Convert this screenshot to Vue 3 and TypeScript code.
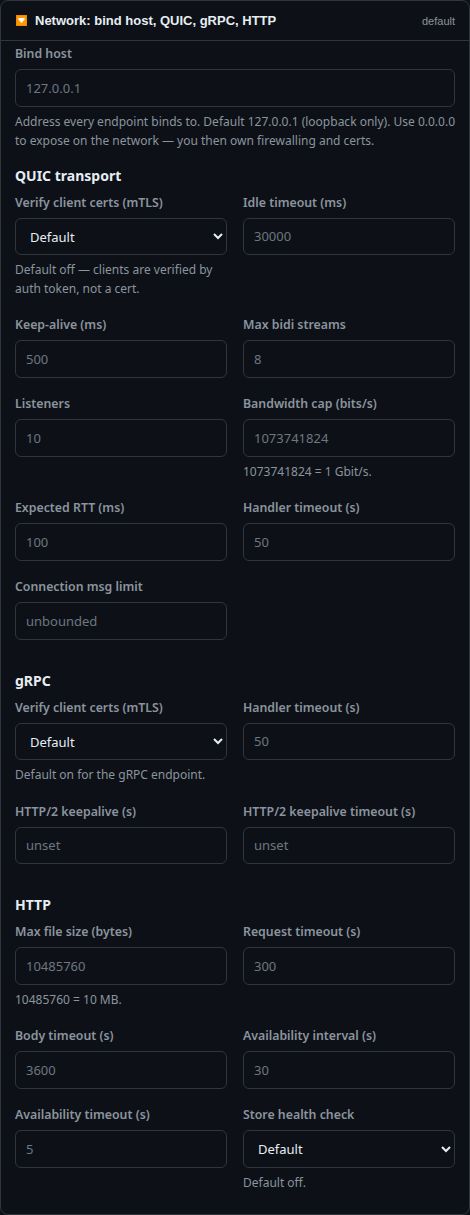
<script setup lang="ts">
type Field = {
  label: string
  placeholder?: string
  select?: boolean
  help?: string
}

type Section = {
  title?: string
  rows: Field[][]
}

const sections: Section[] = [
  {
    title: 'QUIC transport',
    rows: [
      [
        { label: 'Verify client certs (mTLS)', select: true, help: 'Default off — clients are verified by auth token, not a cert.' },
        { label: 'Idle timeout (ms)', placeholder: '30000' },
      ],
      [
        { label: 'Keep-alive (ms)', placeholder: '500' },
        { label: 'Max bidi streams', placeholder: '8' },
      ],
      [
        { label: 'Listeners', placeholder: '10' },
        { label: 'Bandwidth cap (bits/s)', placeholder: '1073741824', help: '1073741824 = 1 Gbit/s.' },
      ],
      [
        { label: 'Expected RTT (ms)', placeholder: '100' },
        { label: 'Handler timeout (s)', placeholder: '50' },
      ],
      [{ label: 'Connection msg limit', placeholder: 'unbounded' }],
    ],
  },
  {
    title: 'gRPC',
    rows: [
      [
        { label: 'Verify client certs (mTLS)', select: true, help: 'Default on for the gRPC endpoint.' },
        { label: 'Handler timeout (s)', placeholder: '50' },
      ],
      [
        { label: 'HTTP/2 keepalive (s)', placeholder: 'unset' },
        { label: 'HTTP/2 keepalive timeout (s)', placeholder: 'unset' },
      ],
    ],
  },
  {
    title: 'HTTP',
    rows: [
      [
        { label: 'Max file size (bytes)', placeholder: '10485760', help: '10485760 = 10 MB.' },
        { label: 'Request timeout (s)', placeholder: '300' },
      ],
      [
        { label: 'Body timeout (s)', placeholder: '3600' },
        { label: 'Availability interval (s)', placeholder: '30' },
      ],
      [
        { label: 'Availability timeout (s)', placeholder: '5' },
        { label: 'Store health check', select: true, help: 'Default off.' },
      ],
    ],
  },
]
</script>

<template>
  <div class="card">
    <header class="head">
      <span class="marker" aria-hidden="true">
        <svg viewBox="0 0 9 9" width="9" height="9"><path d="M1.5 2h6v1.5L4.5 7 1.5 3.5z" fill="#fff" /></svg>
      </span>
      <span class="title">Network: bind host, QUIC, gRPC, HTTP</span>
      <span class="tag">default</span>
    </header>
    <div class="body">
      <label class="field bind">
        <span class="label">Bind host</span>
        <input class="control" placeholder="127.0.0.1" />
        <span class="help">Address every endpoint binds to. Default 127.0.0.1 (loopback only). Use 0.0.0.0 to expose on the network — you then own firewalling and certs.</span>
      </label>
      <section v-for="s in sections" :key="s.title" class="section">
        <h3 class="section-title">{{ s.title }}</h3>
        <div v-for="(row, i) in s.rows" :key="i" class="row">
          <label v-for="f in row" :key="f.label" class="field">
            <span class="label">{{ f.label }}</span>
            <select v-if="f.select" class="control select">
              <option>Default</option>
            </select>
            <input v-else class="control" :placeholder="f.placeholder" />
            <span v-if="f.help" class="help">{{ f.help }}</span>
          </label>
        </div>
      </section>
    </div>
  </div>
</template>

<style>
html, body { background: #0d1117; color-scheme: dark; }
</style>

<style scoped>
.card {
  box-sizing: border-box;
  width: 470px;
  height: 1215px;
  background: #0d1117;
  border: 1px solid #30363d;
  border-radius: 8px;
  font-family: "Noto Sans", sans-serif;
  overflow: hidden;
}
.head {
  display: flex;
  align-items: center;
  height: 39px;
  padding: 0 14px 0 15px;
  border-bottom: 1px solid #30363d;
  box-sizing: content-box;
}
.marker {
  box-sizing: border-box;
  width: 11px;
  height: 11px;
  background: #ff9800;
  border: 1px solid #ef8a00;
  display: flex;
  align-items: center;
  justify-content: center;
  margin-right: 8px;
}
.title {
  font: 700 13px "Liberation Sans", Arial, sans-serif;
  color: #e6edf3;
}
.tag {
  margin-left: auto;
  font: 400 11px "Liberation Sans", Arial, sans-serif;
  color: #8b949e;
}
.body {
  padding: 3px 14px 0;
}
.field {
  display: flex;
  flex-direction: column;
  min-width: 0;
}
.label {
  font-size: 12.32px;
  font-weight: 600;
  line-height: 20px;
  color: #8b949e;
  margin-bottom: 5px;
}
.control {
  box-sizing: border-box;
  width: 100%;
  height: 37.5px;
  padding: 0 10px;
  background: #0d1117;
  border: 1px solid #30363d;
  border-radius: 6px;
  color: #e6edf3;
  font-family: inherit;
  font-size: 13px;
  color-scheme: dark;
}
.select {
  padding-top: 1px;
}
.control::placeholder {
  color: #6e7681;
  opacity: 1;
}
.help {
  font-size: 12px;
  line-height: 18.5px;
  color: #8b949e;
  margin-top: 6px;
  padding-bottom: 0.5px;
}
.bind .help {
  margin-top: 6.5px;
  padding-bottom: 0;
}
.section {
  margin-top: 16.5px;
}
.section + .section {
  margin-top: 32.1px;
}
.section-title {
  margin: 0 0 8px;
  font-size: 14px;
  font-weight: 700;
  line-height: 18px;
  color: #e6edf3;
}
.row {
  display: grid;
  grid-template-columns: 1fr 1fr;
  gap: 16px;
  margin-bottom: 16.5px;
}
</style>
